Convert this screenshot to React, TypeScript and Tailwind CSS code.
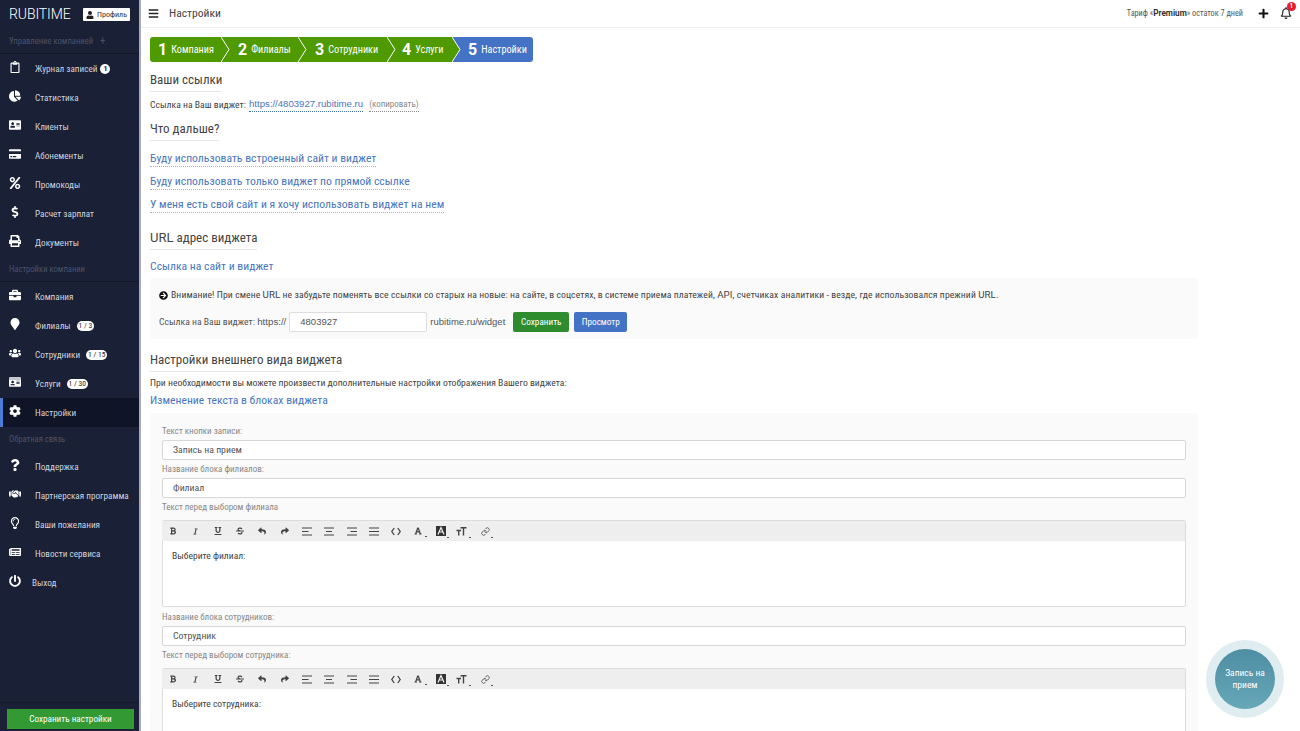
import type { ComponentType, ReactNode } from "react";
import {
  FaBars, FaBold, FaBriefcase, FaChartPie, FaCog, FaCreditCard, FaDollarSign, FaHandshake, FaIdCard, FaItalic,
  FaMapMarker, FaNewspaper, FaPercent, FaPlus, FaPowerOff, FaPrint, FaQuestion, FaRegBell, FaRegClipboard,
  FaRegLightbulb, FaStrikethrough, FaUnderline, FaUser, FaUsers, FaArrowCircleRight, FaReply, FaShare,
  FaFont, FaAddressCard,
} from "react-icons/fa";
import { Link } from "lucide-react";

type Icon = ComponentType<{ className?: string }>;
type Item = { icon: Icon; label: string; badge?: string; active?: boolean; narrow?: boolean };

const group1: Item[] = [
  { icon: FaRegClipboard, label: "Журнал записей", badge: "1" },
  { icon: FaChartPie, label: "Статистика" },
  { icon: FaAddressCard, label: "Клиенты" },
  { icon: FaCreditCard, label: "Абонементы" },
  { icon: FaPercent, label: "Промокоды" },
  { icon: FaDollarSign, label: "Расчет зарплат" },
  { icon: FaPrint, label: "Документы" },
];
const group2: Item[] = [
  { icon: FaBriefcase, label: "Компания" },
  { icon: FaMapMarker, label: "Филиалы", badge: "1 / 3" },
  { icon: FaUsers, label: "Сотрудники", badge: "1 / 15" },
  { icon: FaIdCard, label: "Услуги", badge: "1 / 30" },
  { icon: FaCog, label: "Настройки", active: true },
];
const group3: Item[] = [
  { icon: FaQuestion, label: "Поддержка" },
  { icon: FaHandshake, label: "Партнерская программа" },
  { icon: FaRegLightbulb, label: "Ваши пожелания" },
  { icon: FaNewspaper, label: "Новости сервиса" },
  { icon: FaPowerOff, label: "Выход", narrow: true },
];

const steps = [
  { n: "1", label: "Компания", w: "w-[72px]", pl: "pl-[8px]" },
  { n: "2", label: "Филиалы", w: "w-[77px]", pl: "pl-[16px]" },
  { n: "3", label: "Сотрудники", w: "w-[89px]", pl: "pl-[16px]" },
  { n: "4", label: "Услуги", w: "w-[65px]", pl: "pl-[14px]" },
];

function NavItem({ item }: { item: Item }) {
  const I = item.icon;
  return (
    <div className={`flex h-[29px] items-center border-l-[3px] ${item.active ? "border-[#4d7cd6] bg-[#0f1426]" : "border-transparent"}`}>
      <span className="-mt-[3px] flex w-[24px] justify-center"><I className="text-[12px] text-white" /></span>
      <span className={`${item.narrow ? "ml-[5px]" : "ml-[8px]"} whitespace-nowrap text-[9.2px] text-[#cfd3de]`}>{item.label}</span>
      {item.badge === "1" ? (
        <span className="ml-[3px] flex h-[10px] w-[10px] items-center justify-center rounded-full bg-white text-[8px] font-bold leading-none text-[#1a2035]">1</span>
      ) : item.badge ? (
        <span className="ml-[6px] flex h-[10px] items-center justify-center rounded-full bg-white px-[2px] text-[7.5px] leading-none text-[#1a2035]">{item.badge}</span>
      ) : null}
    </div>
  );
}

function GroupTitle({ children, line = true }: { children: ReactNode; line?: boolean }) {
  return (
    <div className={`flex h-[25px] items-center gap-[7px] pl-[9px] text-[8.6px] text-[#4b5268] ${line ? "border-b border-[#12172a]" : ""}`}>{children}</div>
  );
}

function Sidebar() {
  return (
    <aside className="flex h-full w-[141px] shrink-0 flex-col border-r-2 border-[#a9abbd] bg-[#1a2035]">
      <div className="flex h-[29px] shrink-0 items-center justify-between pl-[9px] pr-[9px]">
        <span className="font-['Roboto',sans-serif] text-[14px] font-light tracking-[-0.1px] text-white">RUBITIME</span>
        <span className="flex h-[13px] w-[47px] items-center justify-center gap-[3px] rounded-[1px] bg-white text-[8px] text-[#333]"><FaUser className="text-[8px] text-[#222]" />Профиль</span>
      </div>
      <GroupTitle>Управление компанией <span className="text-[11px]">+</span></GroupTitle>
      {group1.map((i) => <NavItem key={i.label} item={i} />)}
      <GroupTitle>Настройки компании</GroupTitle>
      {group2.map((i) => <NavItem key={i.label} item={i} />)}
      <GroupTitle line={false}>Обратная связь</GroupTitle>
      {group3.map((i) => <NavItem key={i.label} item={i} />)}
      <div className="mt-auto border-t border-[#141a2c] pb-[2px] pl-[7px] pr-[5px] pt-[6px]">
        <div className="flex h-[20px] items-center justify-center bg-[#339933] text-[9.2px] text-white">Сохранить настройки</div>
      </div>
    </aside>
  );
}

function Heading({ children, mt = "" }: { children: ReactNode; mt?: string }) {
  return <h2 className={`${mt} w-fit border-b border-[#e6e6e6] pb-[3px] text-[13px] font-normal leading-[17px] text-[#444]`}>{children}</h2>;
}

function BigLink({ children }: { children: ReactNode }) {
  return <a className="block w-fit border-b border-dotted border-[#9db4de] text-[11.7px] leading-[15px] text-[#4a76c0]">{children}</a>;
}

function Field({ label, value }: { label: string; value: string }) {
  return (
    <div>
      <div className="text-[9px] leading-[13px] text-[#888]">{label}</div>
      <div className="mt-[2px] flex h-[20px] items-center rounded-[2px] border border-[#d8d8d8] bg-white pl-[10px] text-[9.8px] text-[#555]">{value}</div>
    </div>
  );
}

function Align({ top, mid, bot }: { top: string; mid: string; bot: string }) {
  return (
    <svg className="h-[9px] w-[10px]" viewBox="0 0 10 9" fill="none" stroke="#444" strokeWidth="1.2">
      <path d={`${top} ${mid} ${bot}`} />
    </svg>
  );
}

const toolbar: ReactNode[] = [
  <FaBold className="text-[8px] text-[#444]" />,
  <FaItalic className="text-[7px] text-[#444]" />,
  <FaUnderline className="text-[8px] text-[#444]" />,
  <FaStrikethrough className="text-[8px] text-[#444]" />,
  <FaReply className="text-[8px] text-[#444]" />,
  <FaShare className="text-[8px] text-[#444]" />,
  <Align top="M0 1H10" mid="M0 4.5H6.5" bot="M0 8H10" />,
  <Align top="M0 1H10" mid="M2 4.5H8" bot="M0 8H10" />,
  <Align top="M0 1H10" mid="M3.5 4.5H10" bot="M0 8H10" />,
  <Align top="M0 1H10" mid="M0 4.5H10" bot="M0 8H10" />,
  <svg className="h-[9px] w-[10px]" viewBox="0 0 10 9" fill="none" stroke="#444" strokeWidth="1.3"><path d="M3.2 1 L0.8 4.5 L3.2 8 M6.8 1 L9.2 4.5 L6.8 8" /></svg>,
  <FaFont className="text-[8px] text-[#444]" />,
  <svg className="h-[10px] w-[10px]" viewBox="0 0 10 10"><rect width="10" height="10" fill="#333" /><path d="M2 8.5 L5 1.5 L8 8.5 M3.3 6H6.7" fill="none" stroke="#eee" strokeWidth="1.2" /></svg>,
  <svg className="-ml-[3px] h-[9px] w-[11px]" viewBox="0 0 11 9" fill="none" stroke="#444" strokeWidth="1.4"><path d="M0.5 3.5H5 M2.7 3.5V8.5 M4.5 0.8H10.5 M7.5 0.8V8.5" /></svg>,
  <Link className="h-[9px] w-[9px] text-[#444]" strokeWidth={2} />,
];

function Editor({ text, height }: { text: string; height: string }) {
  return (
    <div className="rounded-[2px] border border-[#dcdcdc] bg-white">
      <div className="-ml-[1px] flex h-[20px] items-center bg-[#eeeeee]">
        {toolbar.map((t, i) => (
          <span key={i} className="relative flex w-[22.3px] justify-center">
            {t}
            {i >= 11 && <span className="absolute bottom-[-2px] right-[3px] h-[1px] w-[2px] bg-[#555]" />}
          </span>
        ))}
      </div>
      <div className={`${height} pl-[9px] pt-[8px] text-[9.6px] leading-[13px] text-[#444]`}>{text}</div>
    </div>
  );
}

function Chevron() {
  return (
    <svg className="absolute right-[-8px] top-0 z-10 h-[25px] w-[9px]" viewBox="0 0 9 25" fill="none">
      <path d="M0 0 L8 12.5 L0 25 Z" fill="#4f9a00" />
      <path d="M0 0 L8 12.5 L0 25" stroke="#ffffff" strokeWidth="1" />
    </svg>
  );
}

export default function App() {
  return (
    <div className="flex h-screen w-full overflow-hidden bg-white font-['Roboto_Condensed',sans-serif]">
      <Sidebar />
      <main className="min-w-0 flex-1">
        <header className="flex h-[28px] items-center justify-between border-b border-[#eeeeee] pl-[7px] pr-[8px]">
          <div className="flex items-center gap-[10px]">
            <FaBars className="text-[11px] text-[#222]" />
            <span className="text-[11.6px] text-[#444]">Настройки</span>
          </div>
          <div className="flex items-center">
            <span className="text-[8.2px] text-[#555]">Тариф «<b className="font-['Roboto',sans-serif] font-bold text-[#333]">Premium</b>» остаток 7 дней</span>
            <FaPlus className="ml-[15px] text-[11px] text-[#111]" />
            <span className="relative ml-[11px]">
              <FaRegBell className="text-[12px] text-[#222]" />
              <span className="absolute right-[-4px] top-[-5px] flex h-[9px] w-[9px] items-center justify-center rounded-full bg-[#e8192c] text-[6.5px] font-bold text-white">1</span>
            </span>
          </div>
        </header>

        <div className="ml-[9px] w-[1048px]">
          <div className="mt-[9px] flex h-[25px] w-[383px] overflow-hidden rounded-[3px]">
            {steps.map((s) => (
              <div key={s.n} className={`relative flex ${s.w} ${s.pl} items-center bg-[#4f9a00] text-white`}>
                <span className="font-['Roboto',sans-serif] text-[16px] font-bold leading-none">{s.n}</span>
                <span className="ml-[4px] text-[10.2px]">{s.label}</span>
                <Chevron />
              </div>
            ))}
            <div className="flex flex-1 items-center bg-[#4472c4] pl-[15px] text-white">
              <span className="font-['Roboto',sans-serif] text-[16px] font-bold leading-none">5</span>
              <span className="ml-[4px] text-[10.2px]">Настройки</span>
            </div>
          </div>

          <Heading mt="mt-[9px]">Ваши ссылки</Heading>
          <div className="mt-[5px] flex items-center text-[9.7px] leading-[14px] text-[#444]">
            Ссылка на Ваш виджет:
            <a className="ml-[3px] border-b border-dotted border-[#3f6fbe] font-['Liberation_Sans',sans-serif] text-[9.6px] text-[#4a76c0]">https://4803927.rubitime.ru</a>
            <span className="ml-[6px] border-b border-dotted border-[#888] text-[9px] text-[#888]">(копировать)</span>
          </div>

          <Heading mt="mt-[8px]">Что дальше?</Heading>
          <div className="mt-[10px] flex flex-col gap-[7px]">
            <BigLink>Буду использовать встроенный сайт и виджет</BigLink>
            <BigLink>Буду использовать только виджет по прямой ссылке</BigLink>
            <BigLink>У меня есть свой сайт и я хочу использовать виджет на нем</BigLink>
          </div>

          <Heading mt="mt-[16px]"><span className="font-['Roboto',sans-serif]">URL</span> адрес виджета</Heading>
          <div className="mt-[9px] text-[11.7px] leading-[15px] text-[#4a76c0]">Ссылка на сайт и виджет</div>

          <section className="mt-[4px] h-[61px] rounded-[3px] bg-[#fafafa] pl-[9px] pt-[10px]">
            <div className="flex items-center text-[9.7px] leading-[14px] tracking-[0.08px] text-[#444]">
              <FaArrowCircleRight className="mr-[3px] text-[9px] text-[#111]" />
              <span>Внимание! При смене <span className="font-['Roboto',sans-serif]">URL</span> не забудьте поменять все ссылки со старых на новые: на сайте, в соцсетях, в системе приема платежей, <span className="font-['Roboto',sans-serif]">API</span>, счетчиках аналитики - везде, где использовался прежний <span className="font-['Roboto',sans-serif]">URL</span>.</span>
            </div>
            <div className="mt-[10px] flex items-center text-[9.7px] text-[#555]">
              <span>Ссылка на Ваш виджет: <span className="font-['Liberation_Sans',sans-serif]">https://</span></span>
              <div className="ml-[3px] flex h-[20px] w-[138px] items-center rounded-[2px] border border-[#dddddd] bg-white pl-[10px] font-['Liberation_Sans',sans-serif] text-[9.5px]">4803927</div>
              <span className="ml-[3px] font-['Liberation_Sans',sans-serif] text-[9.5px]">rubitime.ru/widget</span>
              <span className="ml-[8px] flex h-[20px] w-[56px] items-center justify-center rounded-[2px] bg-[#2e8b2e] text-[9.2px] text-white">Сохранить</span>
              <span className="ml-[5px] flex h-[20px] w-[53px] items-center justify-center rounded-[2px] bg-[#4472c4] text-[9.2px] text-white">Просмотр</span>
            </div>
          </section>

          <Heading mt="mt-[12px]">Настройки внешнего вида виджета</Heading>
          <p className="mt-[4px] text-[9.7px] leading-[14px] text-[#444]">При необходимости вы можете произвести дополнительные настройки отображения Вашего виджета:</p>
          <div className="mt-[3px] text-[11.7px] leading-[15px] text-[#4a76c0]">Изменение текста в блоках виджета</div>

          <section className="mt-[5px] flex flex-col gap-[3px] rounded-[3px] bg-[#fafafa] px-[12px] pt-[12px]">
            <Field label="Текст кнопки записи:" value="Запись на прием" />
            <Field label="Название блока филиалов:" value="Филиал" />
            <div>
              <div className="mb-[6px] text-[9px] leading-[13px] text-[#888]">Текст перед выбором филиала</div>
              <Editor text="Выберите филиал:" height="h-[65px]" />
            </div>
            <div className="mt-[1px]"><Field label="Название блока сотрудников:" value="Сотрудник" /></div>
            <div>
              <div className="mb-[6px] text-[9px] leading-[13px] text-[#888]">Текст перед выбором сотрудника:</div>
              <Editor text="Выберите сотрудника:" height="h-[65px]" />
            </div>
          </section>
        </div>
      </main>

      <div className="fixed bottom-[13px] right-[16px] flex h-[78px] w-[78px] items-center justify-center rounded-full bg-[#dfecf0]">
        <div className="flex h-[60px] w-[60px] items-center justify-center rounded-full bg-gradient-to-b from-[#4d8ea3] to-[#66a7b8] text-center text-[9.5px] leading-[12px] text-white">Запись на<br />прием</div>
      </div>
    </div>
  );
}
